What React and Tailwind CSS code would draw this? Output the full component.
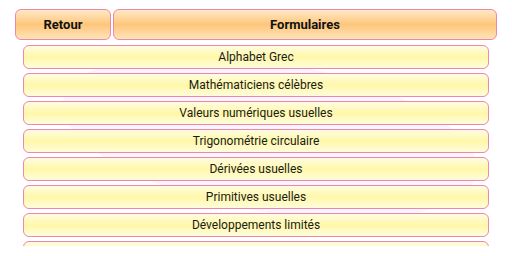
const items = [
  'Alphabet Grec',
  'Mathématiciens célèbres',
  'Valeurs numériques usuelles',
  'Trigonométrie circulaire',
  'Dérivées usuelles',
  'Primitives usuelles',
  'Développements limités',
  '',
];

export default function App() {
  return (
    <div className="relative w-[512px] h-[256px] bg-white overflow-hidden" style={{ fontFamily: 'Roboto, "Liberation Sans", sans-serif' }}>
      {/* faint watermark */}
      <div className="absolute left-[60px] top-[62px] w-[420px] h-[150px] rounded-[50%] bg-[#eeeafc] opacity-50 rotate-[10deg]" />
      <div className="relative flex gap-[2px] pl-[15px] pr-[15px] pt-[9px]">
        <button className="w-[96px] h-[31px] rounded-[6px] border-[1.5px] border-[#ef86ac] bg-gradient-to-b from-[#ffe9c6] via-[#fdc67a] to-[#ffe3b8] text-[13px] font-bold text-[#111]">
          Retour
        </button>
        <div className="flex-1 h-[31px] rounded-[6px] border-[1.5px] border-[#ef86ac] bg-gradient-to-b from-[#ffe9c6] via-[#fdc67a] to-[#ffe3b8] flex items-center justify-center text-[13px] font-bold text-[#111]">
          Formulaires
        </div>
      </div>
      <div className="relative mt-[5px] mx-[23px] h-[201px] overflow-hidden flex flex-col gap-[4px]">
        {items.map((t, i) => (
          <div
            key={i}
            className="shrink-0 h-[24px] rounded-[6px] border-[1.5px] border-[#ef86ac] bg-gradient-to-b from-[#fffce2] via-[#fff8a8] to-[#fffcdc] flex items-center justify-center text-[12px] text-[#1a1a1a]"
          >
            {t}
          </div>
        ))}
      </div>
    </div>
  );
}
